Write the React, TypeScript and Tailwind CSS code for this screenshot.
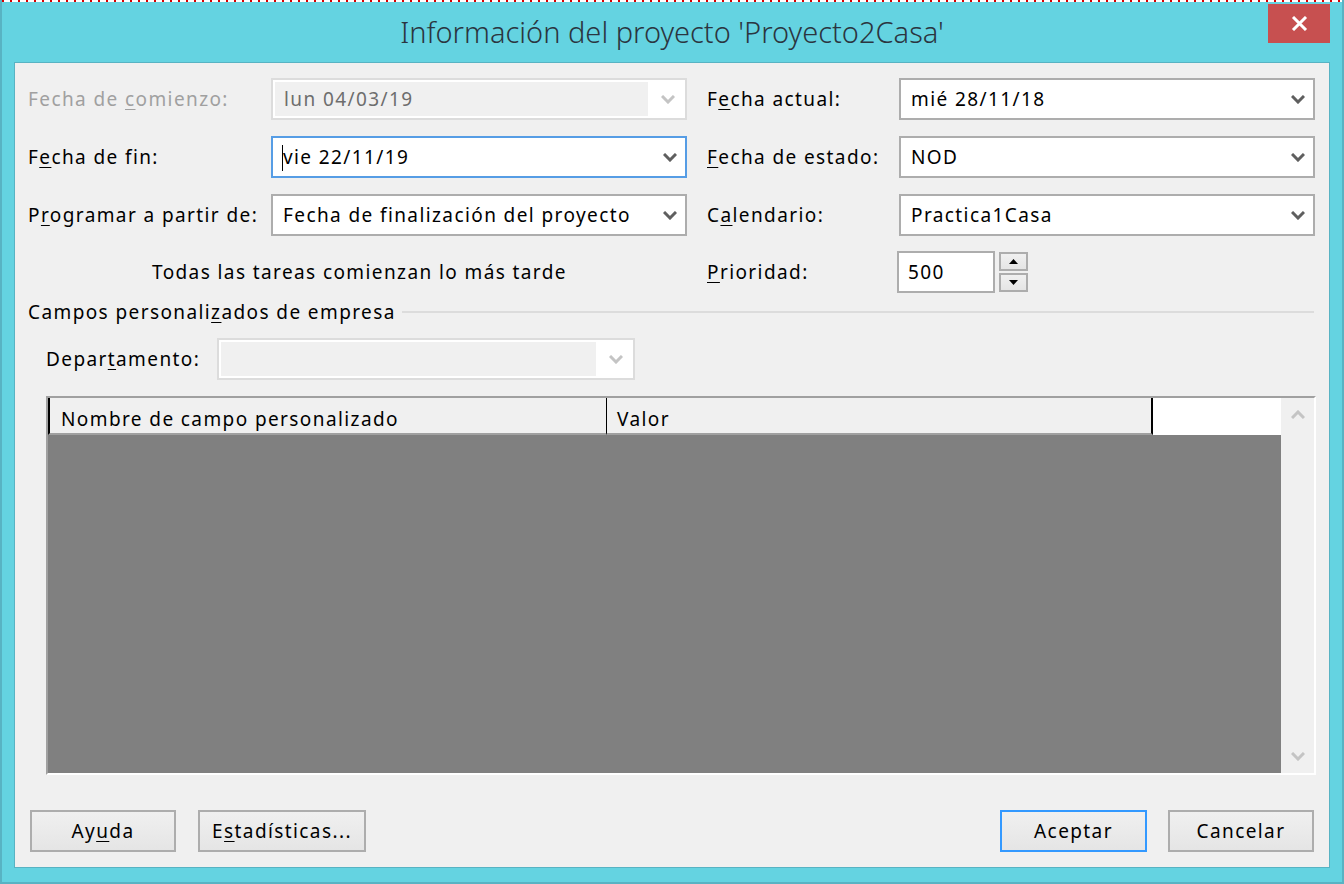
import React from "react";

const font = { fontFamily: '"Segoe UI", "Noto Sans", "Open Sans", sans-serif' };

const Chevron = ({ up = false, color = "#5f5f5f" }: { up?: boolean; color?: string }) => (
  <svg width="14" height="9" viewBox="0 0 14 9">
    <polyline
      points={up ? "1,8 7,2 13,8" : "1,1 7,7 13,1"}
      fill="none"
      stroke={color}
      strokeWidth="3"
    />
  </svg>
);

const U = ({ children }: { children: React.ReactNode }) => <span className="underline underline-offset-[3px]">{children}</span>;

interface ComboProps {
  value: string;
  disabled?: boolean;
  focused?: boolean;
  width?: string;
}

const Combo = ({ value, disabled, focused, width = "w-[416px]" }: ComboProps) => {
  if (disabled) {
    return (
      <div className={`${width} h-[42px] border-2 border-[#dcdcdc] bg-white p-[2px] flex`}>
        <div className="flex-1 bg-[#f0f0f0] flex items-center pl-[9px] text-[#6d6d6d]">{value}</div>
        <div className="w-[35px] flex items-center justify-end pr-[8px]">
          <Chevron color="#c4c4c4" />
        </div>
      </div>
    );
  }
  return (
    <div
      className={`${width} h-[42px] border-2 bg-white flex items-center ${
        focused ? "border-[#569de5]" : "border-[#adadad]"
      }`}
    >
      <div className="flex-1 flex items-center pl-[10px] text-black relative">
        {focused && <span className="absolute left-[9px] top-[-3px] w-[1px] h-[26px] bg-black" />}
        {value}
      </div>
      <div className="w-[30px] flex items-center justify-center">
        <Chevron />
      </div>
    </div>
  );
};

const Btn = ({ children, focused }: { children: React.ReactNode; focused?: boolean }) => (
  <div
    className={`h-[42px] border-2 flex items-center justify-center bg-gradient-to-b from-[#f0f0f0] to-[#e5e5e5] text-black ${
      focused ? "border-[#3399ff]" : "border-[#adadad]"
    }`}
  >
    {children}
  </div>
);

export default function App() {
  return (
    <div
      className="w-[1344px] h-[884px] bg-[#64d3e1] border-2 border-t-0 border-[#58b3c3] flex flex-col text-[19px] tracking-[1.4px] leading-none"
      style={font}
    >
      <div className="h-[2px] bg-[repeating-linear-gradient(90deg,#d40000_0px,#d40000_2px,#ffffff_2px,#ffffff_8px)]" />
      {/* title bar */}
      <div className="h-[60px] flex items-start relative">
        <div className="flex-1 text-center pt-[15px] text-[29px] tracking-normal text-[#2b3540] font-light">
          Información del proyecto 'Proyecto2Casa'
        </div>
        <div className="absolute right-[12px] top-[2px] w-[62px] h-[39px] bg-[#c75050] flex items-center justify-center">
          <svg width="17" height="15" viewBox="0 0 17 15">
            <path d="M2 1 L15 14 M15 1 L2 14" stroke="white" strokeWidth="3" />
          </svg>
        </div>
      </div>

      {/* client area */}
      <div className="mx-[12px] mb-[14px] flex-1 border border-[#58b3c3] bg-[#f0f0f0] flex flex-col pt-[15px] pr-[13px]">
        {/* row 1 */}
        <div className="flex items-center h-[42px]">
          <div className="w-[256px] pl-[13px] text-[#a0a0a0]">
            Fecha de <U>c</U>omienzo:
          </div>
          <Combo value="lun 04/03/19" disabled />
          <div className="w-[212px] pl-[20px] text-black">
            F<U>e</U>cha actual:
          </div>
          <Combo value="mié 28/11/18" />
        </div>
        {/* row 2 */}
        <div className="flex items-center h-[42px] mt-[16px]">
          <div className="w-[256px] pl-[13px] text-black">
            F<U>e</U>cha de fin:
          </div>
          <Combo value="vie 22/11/19" focused />
          <div className="w-[212px] pl-[20px] text-black">
            <U>F</U>echa de estado:
          </div>
          <Combo value="NOD" />
        </div>
        {/* row 3 */}
        <div className="flex items-center h-[42px] mt-[16px]">
          <div className="w-[256px] pl-[13px] text-black">
            P<U>r</U>ogramar a partir de:
          </div>
          <Combo value="Fecha de finalización del proyecto" />
          <div className="w-[212px] pl-[20px] text-black">
            C<U>a</U>lendario:
          </div>
          <Combo value="Practica1Casa" />
        </div>
        {/* row 4 */}
        <div className="flex items-center h-[42px] mt-[15px]">
          <div className="w-[672px] pl-[137px] text-black">Todas las tareas comienzan lo más tarde</div>
          <div className="w-[210px] pl-[20px] text-black">
            <U>P</U>rioridad:
          </div>
          <div className="w-[98px] h-[42px] border-2 border-[#adadad] bg-white flex items-center pl-[9px] text-black">
            500
          </div>
          <div className="ml-[4px] w-[29px] h-[40px] flex flex-col gap-[2px]">
            <div className="flex-1 border-2 border-[#adadad] bg-gradient-to-b from-[#f0f0f0] to-[#e5e5e5] flex items-center justify-center">
              <svg width="9" height="5" viewBox="0 0 9 5">
                <polygon points="0,5 4.5,0 9,5" fill="black" />
              </svg>
            </div>
            <div className="flex-1 border-2 border-[#adadad] bg-gradient-to-b from-[#f0f0f0] to-[#e5e5e5] flex items-center justify-center">
              <svg width="9" height="5" viewBox="0 0 9 5">
                <polygon points="0,0 4.5,5 9,0" fill="black" />
              </svg>
            </div>
          </div>
        </div>
        {/* group separator */}
        <div className="flex items-center mt-[8px] h-[22px] pl-[13px] pr-[2px]">
          <span className="text-black">
            Campos personali<U>z</U>ados de empresa
          </span>
          <div className="flex-1 ml-[6px] h-[2px] bg-[#dcdcdc]" />
        </div>
        {/* departamento */}
        <div className="flex items-center h-[42px] mt-[15px]">
          <div className="w-[202px] pl-[31px] text-black">
            Depar<U>t</U>amento:
          </div>
          <Combo value="" disabled width="w-[418px]" />
        </div>
        {/* table */}
        <div className="ml-[31px] mt-[16px] h-[379px] border-2 border-t-[#a0a0a0] border-l-[#a0a0a0] border-r-white border-b-white flex">
          <div className="flex-1 flex flex-col">
            <div className="h-[37px] flex text-black">
              <div className="w-[559px] bg-[#f0f0f0] border-l-2 border-l-black border-r border-r-black border-b-2 border-b-[#a0a0a0] flex items-center pt-[7px] pl-[11px]">
                Nombre de campo personalizado
              </div>
              <div className="w-[546px] bg-[#f0f0f0] border-r-2 border-r-black border-b-2 border-b-[#a0a0a0] flex items-center pt-[7px] pl-[10px]">
                Valor
              </div>
              <div className="flex-1 bg-white" />
            </div>
            <div className="flex-1 bg-[#808080]" />
          </div>
          <div className="w-[33px] bg-[#f0f0f0] flex flex-col justify-between items-center py-[12px]">
            <Chevron up color="#c4c4c4" />
            <Chevron color="#c4c4c4" />
          </div>
        </div>
        {/* buttons */}
        <div className="flex items-center mt-[35px] pl-[15px] pr-[2px] text-black">
          <div className="w-[146px]">
            <Btn>
              Ay<U>u</U>da
            </Btn>
          </div>
          <div className="w-[168px] ml-[22px]">
            <Btn>
              E<U>s</U>tadísticas...
            </Btn>
          </div>
          <div className="flex-1" />
          <div className="w-[147px]">
            <Btn focused>Aceptar</Btn>
          </div>
          <div className="w-[146px] ml-[21px]">
            <Btn>Cancelar</Btn>
          </div>
        </div>
      </div>
    </div>
  );
}
